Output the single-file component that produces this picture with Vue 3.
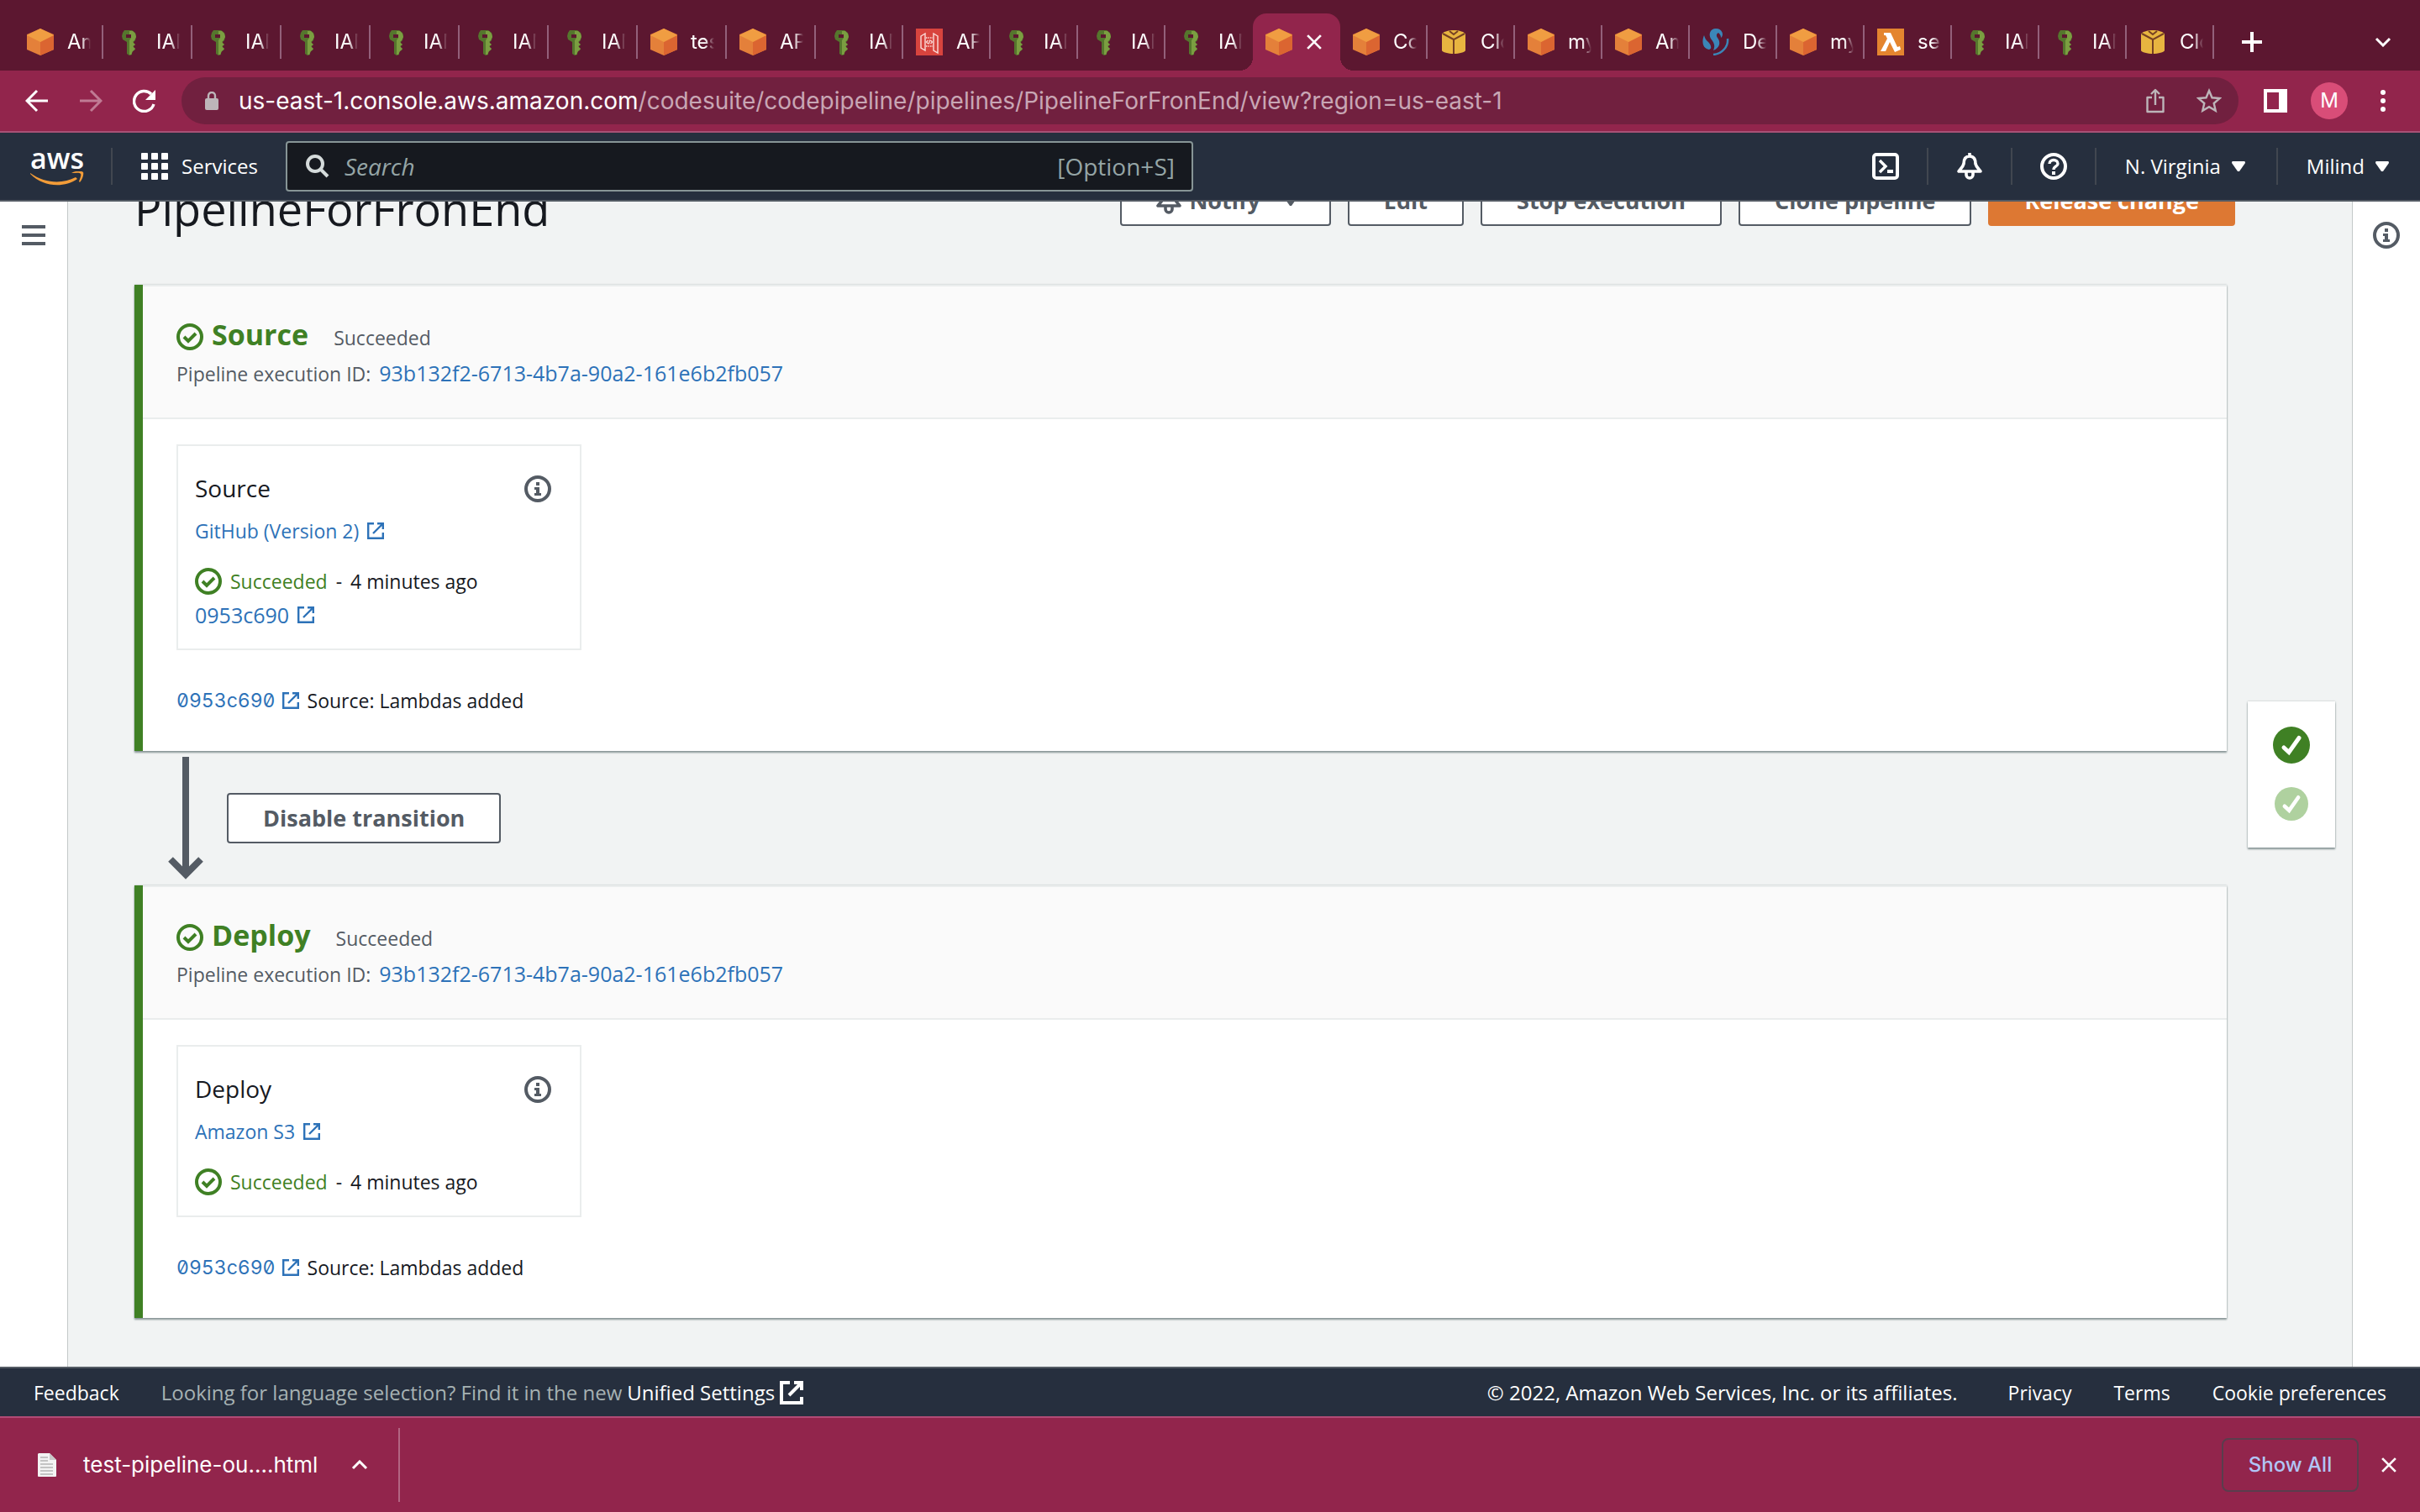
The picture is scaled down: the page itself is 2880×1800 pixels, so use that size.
<script setup>
const tabs = [
  { icon: 'cube', text: 'Amazon' }, { icon: 'key', text: 'IAM' }, { icon: 'key', text: 'IAM' },
  { icon: 'key', text: 'IAM' }, { icon: 'key', text: 'IAM' }, { icon: 'key', text: 'IAM' },
  { icon: 'key', text: 'IAM' }, { icon: 'cube', text: 'test' }, { icon: 'cube', text: 'API' },
  { icon: 'key', text: 'IAM' }, { icon: 'gateway', text: 'API' }, { icon: 'key', text: 'IAM' },
  { icon: 'key', text: 'IAM' }, { icon: 'key', text: 'IAM' }, { icon: 'cube', text: '', active: true },
  { icon: 'cube', text: 'Code' }, { icon: 'box', text: 'Cloud' }, { icon: 'cube', text: 'my' },
  { icon: 'cube', text: 'Amazon' }, { icon: 'swirl', text: 'Dev' }, { icon: 'cube', text: 'my' },
  { icon: 'lambda', text: 'serv' }, { icon: 'key', text: 'IAM' }, { icon: 'key', text: 'IAM' },
  { icon: 'box', text: 'Cloud' },
]

const executionId = '93b132f2-6713-4b7a-90a2-161e6b2fb057'
const stages = [
  { name: 'Source', provider: 'GitHub (Version 2)', commit: '0953c690' },
  { name: 'Deploy', provider: 'Amazon S3', commit: '' },
]
</script>

<template>
  <svg class="sprite" aria-hidden="true">
    <symbol id="i-cube" viewBox="0 0 32 32">
      <path d="M16 0 32 7v18l-16 7L0 25V7z" fill="#e4803a" />
      <path d="M16 16 32 7v18l-16 7z" fill="#db6531" />
      <path d="M16 0 32 8 16 16 0 8z" fill="#f09d42" />
    </symbol>
    <symbol id="i-key" viewBox="0 0 32 32">
      <path fill-rule="evenodd" d="M10 2h9l4 3 1 4-1 5-2 2v2l2 1-2 2v2l2 1-1 2-3 1v4l-3 1-3-2V16l-5-3-1-4 1-4zM12 7v4h6V7z" fill="#55762d" />
      <path fill-rule="evenodd" d="M16 3h4l3 3 1 4-2 4-2 2 3 3-3 2 3 3-3 3-2 4h-2V14l2-3V7h-2z" fill="#7b9e41" />
    </symbol>
    <symbol id="i-box" viewBox="0 0 32 32">
      <path d="M16 2c6 0 14 2 14 5v19c0 2-8 4-14 4S2 28 2 26V7c0-3 8-5 14-5z" fill="#e8b540" />
      <path d="M3 6l13 7M29 6l-13 7v17M11 3l5 4 5-4" stroke="#754023" stroke-width="2" fill="none" />
    </symbol>
    <symbol id="i-gateway" viewBox="0 0 32 32">
      <path d="M0 0h32v32H0z" fill="#d8443e" />
      <path d="M6 9l5-3v20l-5-3zM26 9l-5-3v20l5 3z" fill="none" stroke="#fbdcd9" stroke-width="1.400" />
      <path d="M12 11h8M12 21h8" stroke="#fbdcd9" stroke-width="1.400" stroke-dasharray="1.500 1" />
      <path d="M14.500 14l-2 2 2 2M17.500 14l2 2-2 2M16.800 13.500l-1.600 5" fill="none" stroke="#fbdcd9" stroke-width="1.200" />
    </symbol>
    <symbol id="i-lambda" viewBox="0 0 32 32">
      <path d="M0 0h32v32H0z" fill="#e4852f" />
      <path d="M8 5h8l8 17 3-1 1 4-7 3-6-12-5 11H4l8-15-2-4H8z" fill="#fff" />
    </symbol>
    <symbol id="i-swirl" viewBox="0 0 32 32">
      <path d="M16 0C9 0 7 7 10 12c3 4 6 8 3 14 8-3 9-10 5-15-2-3-1-5 1-6 2 2 3 3 3 6 4-3 2-11-6-11z" fill="#3b86b8" />
      <path d="M2 8C-1 15 0 24 8 25c4-1 2-6-1-9-3-2-4-5-5-8z" fill="#3b86b8" />
      <path d="M30 12c1 9-6 18-17 19" fill="none" stroke="#3b86b8" stroke-width="2.5" />
    </symbol>
    <symbol id="i-x" viewBox="0 0 16 16"><path d="M1 1l14 14M15 1 1 15" stroke="currentColor" stroke-width="2.4" /></symbol>
    <symbol id="i-chevron" viewBox="0 0 20 12"><path d="M2 2l8 8 8-8" fill="none" stroke="currentColor" stroke-width="3" /></symbol>
    <symbol id="i-caret" viewBox="0 0 16 12"><path d="M1 0h14q1 0 1 2L9 12H7L0 2q0-2 1-2z" fill="currentColor" /></symbol>
    <symbol id="i-external" viewBox="0 0 20 20">
      <path d="M8 1.2H1.2v17.6h17.6V12M12 1.2h6.8V8M18 2 7 13" fill="none" stroke="currentColor" stroke-width="2.4" />
    </symbol>
    <symbol id="i-ok" viewBox="0 0 32 32">
      <circle cx="16" cy="16" r="14" fill="none" stroke="currentColor" stroke-width="4" />
      <path d="M9 16l5 5 9-9" fill="none" stroke="currentColor" stroke-width="4" />
    </symbol>
    <symbol id="i-info" viewBox="0 0 32 32">
      <circle cx="16" cy="16" r="14" fill="none" stroke="currentColor" stroke-width="4" />
      <path d="M14 8h4v4h-4zM12 14h6v7h2v3h-8v-3h2v-4h-2z" fill="currentColor" />
    </symbol>
    <symbol id="i-bell" viewBox="0 0 32 32">
      <path d="M16 4c-6 0-7 5-7 9-1 4-4 6-6 9h26c-2-3-5-5-6-9 0-4-1-9-7-9zM16 0v4" fill="none" stroke="currentColor" stroke-width="3.6" stroke-linejoin="round" />
      <path d="M12 23v3a4 4 0 0 0 8 0v-3" fill="none" stroke="currentColor" stroke-width="3.6" />
    </symbol>
    <symbol id="i-tick" viewBox="0 0 44 44">
      <circle cx="22" cy="22" r="22" fill="currentColor" />
      <path d="M13 25l6 5.500 12-17" fill="none" stroke="#fff" stroke-width="5" stroke-linecap="round" />
    </symbol>
  </svg>

  <div class="window">
    <div class="tab-strip">
      <div v-for="(tab, i) in tabs" :key="i" class="tab" :class="{ active: tab.active, bare: tabs[i + 1]?.active }">
        <svg class="favicon"><use :href="'#i-' + tab.icon" /></svg>
        <button v-if="tab.active" class="plain" aria-label="Close tab"><svg width="18" height="18"><use href="#i-x" /></svg></button>
        <span v-else class="tab-text">{{ tab.text }}</span>
      </div>
      <button class="plain new-tab" aria-label="New tab">
        <svg width="24" height="24" viewBox="0 0 24 24"><path d="M12 0v24M0 12h24" stroke="#fff" stroke-width="4" /></svg>
      </button>
      <button class="plain" aria-label="Search tabs"><svg width="20" height="12"><use href="#i-chevron" /></svg></button>
    </div>

    <div class="toolbar">
      <div class="history">
        <button class="plain" aria-label="Back">
          <svg width="28" height="28" viewBox="0 0 28 28"><path d="M27 14H3M14 2 2 14l12 12" fill="none" stroke="currentColor" stroke-width="3" /></svg>
        </button>
        <button class="plain dim" aria-label="Forward">
          <svg width="28" height="28" viewBox="0 0 28 28"><path d="M1 14h24M14 2l12 12-12 12" fill="none" stroke="currentColor" stroke-width="3" /></svg>
        </button>
        <button class="plain" aria-label="Reload">
          <svg width="28" height="28" viewBox="0 0 28 28"><path d="M25 18a12 12 0 1 1-3-12" fill="none" stroke="currentColor" stroke-width="3.400" /><path d="M27 1v12H15z" fill="currentColor" /></svg>
        </button>
      </div>
      <div class="omnibox">
        <svg class="lock" width="16" height="22" viewBox="0 0 16 22"><path d="M4 9V5a4 4 0 0 1 8 0v4" fill="none" stroke="currentColor" stroke-width="2.400" /><rect y="8" width="16" height="14" rx="2" fill="currentColor" /></svg>
        <div class="url"><span>us-east-1.console.aws.amazon.com</span>/codesuite/codepipeline/pipelines/PipelineForFronEnd/view?region=us-east-1</div>
        <button class="plain" aria-label="Share">
          <svg width="22" height="30" viewBox="0 0 22 30"><path d="M7 11H1.500v17h19V11H15M11 20V3M6 7l5-5 5 5" fill="none" stroke="currentColor" stroke-width="2.400" stroke-linejoin="round" /></svg>
        </button>
        <button class="plain" aria-label="Bookmark">
          <svg width="30" height="30" viewBox="0 0 30 30"><path d="M15 3l3.500 8.300 9 .8-6.800 5.900 2 8.800L15 22.200l-7.700 4.600 2-8.800L2.500 12.100l9-.8z" fill="none" stroke="currentColor" stroke-width="2.400" /></svg>
        </button>
      </div>
      <div class="toolbar-end">
        <button class="plain" aria-label="Side panel"><svg width="28" height="28" viewBox="0 0 28 28"><path fill-rule="evenodd" d="M0 0h28v28H0zM4 4v20h14V4z" fill="#fff" /></svg></button>
        <button class="plain avatar">M</button>
        <button class="plain" aria-label="Menu"><svg width="28" height="28" viewBox="0 0 28 28" fill="#fff"><circle cx="14" cy="4" r="3" /><circle cx="14" cy="14" r="3" /><circle cx="14" cy="24" r="3" /></svg></button>
      </div>
    </div>

    <header class="aws-nav">
      <a href="#" class="logo">
        <span>aws</span>
        <svg width="64" height="17" viewBox="0 0 64 17"><path d="M0 2c18 13 39 13 54 5l2 2C40 20 16 19 0 3zM49 2c5-3 12-3 14-1 1 3-1 9-4 12l-1-1c1-3 3-7 2-9s-6-1-11-1z" fill="#f29c38" /></svg>
      </a>
      <button class="plain services">
        <svg width="32" height="32" viewBox="0 0 32 32" fill="#fff"><template v-for="y in 3" :key="y"><rect v-for="x in 3" :key="x" :x="x * 12 - 12" :y="y * 12 - 12" width="8" height="8" rx="1" /></template></svg>
        Services
      </button>
      <label class="search">
        <svg width="28" height="28" viewBox="0 0 28 28"><circle cx="11" cy="11" r="9" fill="none" stroke="#d5dbdb" stroke-width="4" /><path d="M17 17l9 9" stroke="#d5dbdb" stroke-width="4" /></svg>
        <input type="search" placeholder="Search" aria-label="Search" />
        <span>[Option+S]</span>
      </label>
      <nav class="nav-end">
        <button class="plain nav-item" aria-label="CloudShell">
          <svg width="32" height="32" viewBox="0 0 32 32"><rect x="2" y="2" width="28" height="28" rx="3" fill="none" stroke="#fff" stroke-width="4" /><path d="M9 9l7 7-7 7" fill="none" stroke="#fff" stroke-width="3.400" /><path d="M18 20h7v4h-7z" fill="#fff" /></svg>
        </button>
        <button class="plain nav-item" aria-label="Notifications"><svg width="32" height="32"><use href="#i-bell" /></svg></button>
        <button class="plain nav-item" aria-label="Help">
          <svg width="32" height="32" viewBox="0 0 32 32"><circle cx="16" cy="16" r="14" fill="none" stroke="#fff" stroke-width="4" /><path d="M11 13c0-6 10-6 10 0 0 3-5 3-5 7" fill="none" stroke="#fff" stroke-width="3.400" /><path d="M14 22h4v4h-4z" fill="#fff" /></svg>
        </button>
        <button class="plain nav-item labelled">N. Virginia <svg width="16" height="12"><use href="#i-caret" /></svg></button>
        <button class="plain nav-item labelled">Milind <svg width="16" height="12"><use href="#i-caret" /></svg></button>
      </nav>
    </header>

    <div class="console">
      <div class="rail left">
        <button class="plain" aria-label="Open navigation"><svg width="28" height="24" viewBox="0 0 28 24"><path d="M0 2h28M0 12h28M0 22h28" stroke="currentColor" stroke-width="4" /></svg></button>
      </div>

      <main>
        <div class="page-head">
          <h1>PipelineForFronEnd</h1>
          <div class="actions">
            <button class="btn notify"><svg width="32" height="32"><use href="#i-bell" /></svg>Notify<svg class="caret" width="16" height="12"><use href="#i-caret" /></svg></button>
            <button class="btn">Edit</button>
            <button class="btn">Stop execution</button>
            <button class="btn">Clone pipeline</button>
            <button class="btn primary">Release change</button>
          </div>
        </div>

        <div class="page-body">
          <div class="stages">
            <template v-for="(stage, i) in stages" :key="stage.name">
              <div v-if="i" class="transition">
                <svg width="42" height="146" viewBox="0 0 42 146"><path d="M21 0v138M3 122l18 18 18-18" fill="none" stroke="currentColor" stroke-width="8" /></svg>
                <button class="btn">Disable transition</button>
              </div>
              <section class="stage">
                <header class="stage-head">
                  <div class="stage-title">
                    <svg class="green" width="32" height="32"><use href="#i-ok" /></svg>
                    <div class="title-text"><h2>{{ stage.name }}</h2><span>Succeeded</span></div>
                  </div>
                  <p class="execution">Pipeline execution ID: <a href="#" class="hash">{{ executionId }}</a></p>
                </header>
                <div class="stage-body">
                  <article class="action">
                    <div class="action-title">
                      <h3>{{ stage.name }}</h3>
                      <button class="plain" aria-label="Action details"><svg width="32" height="32"><use href="#i-info" /></svg></button>
                    </div>
                    <div class="row provider"><a href="#">{{ stage.provider }}<svg width="20" height="20"><use href="#i-external" /></svg></a></div>
                    <div class="row status">
                      <svg class="green" width="32" height="32"><use href="#i-ok" /></svg>
                      <span class="green">Succeeded</span><span>-</span><span>4 minutes ago</span>
                    </div>
                    <div v-if="stage.commit" class="row"><a href="#" class="hash">{{ stage.commit }}<svg width="20" height="20"><use href="#i-external" /></svg></a></div>
                  </article>
                  <div class="row summary">
                    <a href="#"><code>0953c690</code><svg width="20" height="20"><use href="#i-external" /></svg></a>
                    <span>Source: Lambdas added</span>
                  </div>
                </div>
              </section>
            </template>
          </div>
          <aside class="minimap">
            <svg class="green" width="44" height="44"><use href="#i-tick" /></svg>
            <svg class="pale" width="40" height="40"><use href="#i-tick" /></svg>
          </aside>
        </div>
      </main>

      <div class="rail right">
        <button class="plain" aria-label="Open help panel"><svg width="32" height="32"><use href="#i-info" /></svg></button>
      </div>
    </div>

    <footer class="aws-footer">
      <a href="#">Feedback</a>
      <p class="language">Looking for language selection? Find it in the new
        <a href="#">Unified Settings<svg width="28" height="28" viewBox="0 0 28 28"><path d="M12 2H2v24h24v-7M17 2h9v9M25 3 11 17" fill="none" stroke="currentColor" stroke-width="4" /></svg></a>
      </p>
      <span class="copyright">© 2022, Amazon Web Services, Inc. or its affiliates.</span>
      <a href="#">Privacy</a>
      <a href="#">Terms</a>
      <a href="#">Cookie preferences</a>
    </footer>

    <div class="downloads">
      <div class="download">
        <svg width="22" height="28" viewBox="0 0 22 28"><path d="M1 0h13l8 8v19q0 1-1 1H1q-1 0-1-1V1z" fill="#f3f3f3" /><path d="M14 0l8 8h-8z" fill="#c9c9c9" /><path d="M3 5h9M3 9h9M3 13h15M3 17h15M3 21h15M3 25h15" stroke="#c4c4c4" stroke-width="2" /></svg>
        <span>test-pipeline-ou....html</span>
        <button class="plain" aria-label="Download options"><svg class="up" width="20" height="12"><use href="#i-chevron" /></svg></button>
      </div>
      <button class="show-all">Show All</button>
      <button class="plain" aria-label="Close downloads"><svg width="18" height="18"><use href="#i-x" /></svg></button>
    </div>
  </div>
</template>

<style>
body { margin: 0; }
</style>

<style scoped>
* { box-sizing: border-box; }
svg { display: block; flex: none; }
h1, h2, h3, p { margin: 0; }
button, input { font: inherit; color: inherit; }
a { color: #2d72b8; text-decoration: none; }
.sprite { position: absolute; width: 0; height: 0; }
.plain { display: flex; align-items: center; justify-content: center; border: 0; padding: 0; background: none; cursor: pointer; }

.window {
  display: flex;
  flex-direction: column;
  min-height: 100vh;
  font: 500 23px/40px "Open Sans", "Noto Sans", sans-serif;
  color: #16191f;
  background: #fff;
}

/* Browser chrome */
.tab-strip {
  display: flex;
  align-items: center;
  height: 84px;
  padding: 16px 34px 0 17px;
  background: #5c1730;
  color: #fff;
  font: 24px/32px Inter, sans-serif;
}
.tab { display: flex; align-items: center; flex: 0 1 106px; min-width: 0; height: 40px; padding-left: 15px; border-right: 2px solid #93607a; }
.tab:nth-child(n + 10) { flex-basis: 104px; }
.tab.bare { border-color: transparent; }
.tab.active { align-self: stretch; height: auto; border: 0; border-radius: 16px 16px 0 0; background: #92254c; position: relative; }
.tab.active::before, .tab.active::after {
  content: "";
  position: absolute;
  bottom: 0;
  width: 16px;
  height: 16px;
  background: radial-gradient(circle at 0 0, transparent 16px, #92254c 16px);
}
.tab.active::before { right: 100%; }
.tab.active::after { left: 100%; background: radial-gradient(circle at 100% 0, transparent 16px, #92254c 16px); }
.tab.active .plain { margin-left: 17px; }
.favicon { width: 32px; height: 32px; }
.tab-text {
  width: 28px;
  margin-left: 16px;
  overflow: hidden;
  white-space: nowrap;
  mask-image: linear-gradient(90deg, #000 60%, transparent);
}
.new-tab { margin: 0 auto 0 33px; }

.toolbar { display: flex; align-items: center; height: 74px; padding: 0 30px; background: #92254c; border-bottom: 2px solid #a85176; color: #fff; }
.history { display: flex; gap: 36px; margin-right: 30px; }
.dim { color: #c07b94; }
.omnibox {
  display: flex;
  align-items: center;
  flex: 1;
  gap: 38px;
  height: 56px;
  padding: 0 20px 0 28px;
  border-radius: 28px;
  background: #71203f;
  color: #bdb5b9;
  font: 28px/40px Inter, sans-serif;
}
.url { flex: 1; margin-left: -14px; color: #c8a6b4; white-space: nowrap; }
.url span { color: #fff; }
.toolbar-end { display: flex; align-items: center; gap: 28px; margin-left: 30px; }
.avatar { width: 44px; height: 44px; border-radius: 50%; background: #d94d78; font: 24px/44px Inter, sans-serif; }

/* Console navigation */
.aws-nav { display: flex; align-items: center; height: 82px; padding-left: 36px; background: #262f3e; border-bottom: 2px solid #545b64; color: #fff; font-size: 24px; }
.logo { display: flex; flex-direction: column; align-items: center; width: 98px; height: 44px; padding-right: 32px; border-right: 2px solid #414750; color: #fff; font-size: 34px; font-weight: 600; line-height: 24px; }
.logo svg { margin-top: 4px; }
.services { gap: 16px; margin: 0 33px 0 34px; }
.search { display: flex; align-items: center; flex: 0 1 1080px; height: 60px; padding: 0 20px 0 22px; border: 2px solid #879596; border-radius: 4px; background: #16191f; color: #95a5a6; font-size: 28px; font-weight: 400; }
.search input { flex: 1; min-width: 0; margin-left: 18px; border: 0; padding: 0; background: none; outline: 0; font-style: italic; }
.search input::placeholder { color: #95a5a6; opacity: 1; }
.nav-end { display: flex; margin-left: auto; }
.nav-item { gap: 13px; height: 44px; padding: 0 33px; border-left: 2px solid #414750; }
.nav-item:first-child { border-color: transparent; }
.nav-item.labelled { padding: 0 37px 0 34px; }

/* Page */
.console { display: flex; flex: 1; color: #545b64; }
.rail { flex: none; width: 81px; padding-top: 24px; }
.rail .plain { width: 100%; height: 32px; }
.rail.left { border-right: 1px solid #c3c8c8; }
.rail.right { border-left: 1px solid #c3c8c8; }
main { flex: 1; min-width: 0; overflow: hidden; background: #f1f3f3; padding-bottom: 58px; }
.page-head { display: flex; justify-content: space-between; align-items: flex-start; margin: -31px 139px 52px 79px; }
h1 { color: #16191f; font-size: 54px; font-weight: 400; line-height: 78px; }
.actions { display: flex; gap: 20px; }
.btn { height: 60px; padding: 0 41px; border: 2px solid #545b64; border-radius: 4px; background: #fff; color: #545b64; font-size: 27px; font-weight: 700; line-height: 36px; white-space: nowrap; cursor: pointer; }
.btn.primary { border-color: #dd7833; background: #dd7833; color: #fff; }
.btn.notify { display: flex; align-items: center; gap: 8px; padding: 0 38px 0 40px; }
.notify .caret { margin-left: 20px; }

.page-body { display: flex; align-items: flex-start; padding: 0 20px 0 79px; }
.stages { flex: 1; }
.stage { border-left: 10px solid #3f8024; background: #fff; box-shadow: 0 2px 2px #879596, 0 0 2px #b5bdbd; }
.stage-head { height: 160px; padding: 38px 40px 0; background: #fafafa; border: solid #eaeded; border-width: 2px 0; }
.stage-title { display: flex; align-items: center; gap: 10px; margin-bottom: 2px; }
.title-text { display: flex; align-items: baseline; gap: 30px; }
h2 { color: #3f8024; font-size: 34px; font-weight: 700; line-height: 38px; }
.green { color: #3f8024; }
.pale { color: #afd19f; }
.hash { font-size: 25px; }
.execution a { margin-left: 4px; }
.stage-body { padding: 30px 40px 40px; color: #16191f; }
.action { width: 482px; padding: 30px 20px 20px; border: 2px solid #eaeded; }
.action-title { display: flex; align-items: center; justify-content: space-between; height: 42px; padding-right: 14px; margin-bottom: 9px; color: #545b64; }
h3 { padding-bottom: 3px; color: #16191f; font-size: 28px; font-weight: 500; }
.row { display: flex; align-items: center; height: 40px; }
.row a { display: flex; align-items: center; gap: 10px; }
.provider { margin-bottom: 20px; }
.status { gap: 10px; }
.summary { gap: 10px; margin-top: 40px; }
.summary a { gap: 8px; }
code { font: 23px/40px Inter, monospace; font-feature-settings: "zero", "tnum"; }

.transition { display: flex; align-items: center; gap: 28px; height: 160px; padding-left: 40px; }

.minimap { display: flex; flex-direction: column; align-items: center; gap: 28px; width: 104px; margin: 496px 0 0 25px; padding: 30px 0 32px; background: #fff; box-shadow: 0 2px 2px #879596, 0 0 2px #b5bdbd; }

.aws-footer { display: flex; align-items: center; gap: 50px; height: 59px; padding: 0 40px; border-top: 2px solid #545b64; background: #262f3e; color: #fff; white-space: nowrap; }
.aws-footer a { color: #fff; }
.language { display: flex; gap: 6px; margin-right: auto; color: #a6b2b3; font-size: 24px; }
.language a { display: flex; align-items: center; gap: 6px; }
.copyright { margin-right: 10px; font-size: 24px; }

.downloads { display: flex; align-items: center; height: 114px; padding-right: 28px; border-top: 2px solid #b14b76; background: #92254c; color: #fff; font: 26px/40px Inter, sans-serif; }
.download { display: flex; align-items: center; gap: 32px; height: 88px; width: 476px; margin-right: auto; padding-left: 45px; border-right: 2px solid #b26582; }
.download .plain { margin-left: 8px; }
.up { transform: rotate(180deg); }
.show-all { width: 163px; height: 64px; margin-right: 27px; border: 2px solid #5a3d4d; border-radius: 8px; background: none; color: #b1c5f5; font-size: 24px; font-weight: 500; }
</style>
